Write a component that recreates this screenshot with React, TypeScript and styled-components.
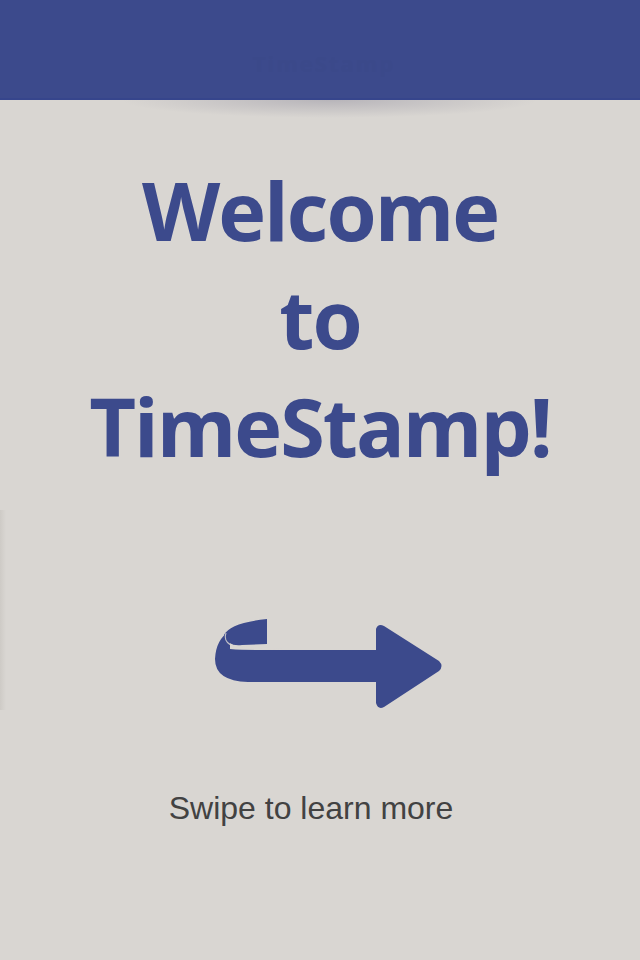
import React from "react";
import styled, { createGlobalStyle } from "styled-components";

const Global = createGlobalStyle`
  html, body { margin: 0; padding: 0; background: #d9d6d2; }
  body { width: 640px; height: 960px; overflow: hidden; }
`;

const Page = styled.div`
  width: 640px;
  height: 960px;
  background: #d9d6d2;
  display: flex;
  flex-direction: column;
  align-items: center;
  position: relative;
  overflow: hidden;
`;

const Header = styled.header`
  width: 100%;
  height: 100px;
  flex: 0 0 100px;
  background: #3c4a8c;
  position: relative;
  display: flex;
  justify-content: center;
  align-items: flex-end;
  overflow: hidden;
  &::after {
    content: "";
    position: absolute;
    left: 0;
    right: 0;
    bottom: 0;
    height: 2px;
    background: #36458c;
  }
`;

const HeaderGhost = styled.span`
  font-family: "Open Sans", "Liberation Sans", sans-serif;
  font-weight: 700;
  font-size: 22px;
  color: #3b498a;
  margin-bottom: 22px;
  letter-spacing: 2px;
  transform: translateX(4px);
`;

const Shadow = styled.div`
  position: absolute;
  top: 100px;
  left: 120px;
  width: 420px;
  height: 18px;
  background: radial-gradient(ellipse at 50% 0%, rgba(120, 118, 140, 0.35) 0%, rgba(120, 118, 140, 0) 70%);
  pointer-events: none;
`;

const Title = styled.h1`
  margin: 56px 0 0 0;
  font-family: "Open Sans", "Liberation Sans", sans-serif;
  font-weight: 700;
  font-size: 81px;
  line-height: 108px;
  letter-spacing: -2px;
  color: #3c4a8c;
  text-align: center;
`;

const ArrowWrap = styled.div`
  margin-top: 134px;
  width: 240px;
  height: 100px;
  display: flex;
  transform: translateX(12px);
`;

const Caption = styled.p`
  margin: 76px 0 0 0;
  font-family: "Liberation Sans", Arial, sans-serif;
  font-size: 32px;
  color: #424242;
  transform: translateX(-9px);
`;

const EdgeShade = styled.div`
  position: absolute;
  left: 0;
  top: 510px;
  width: 6px;
  height: 200px;
  background: linear-gradient(90deg, rgba(180, 176, 170, 0.3), rgba(180, 176, 170, 0));
`;

const Arrow = () => (
  <svg width="240" height="100" viewBox="210 615 240 100">
    <path
      d="M374 651 L374 630 Q376 624 382 627 L437 662 Q442 667 437 672 L382 708 Q376 711 374 704 L374 683 L246 683 Q213 682 213 660 Q214 640 228 632 L228 650 Q240 651 260 651 Z"
      fill="#3c4a8c"
    />
    <path
      d="M222 636 Q228 624 265 620 L265 645 L240 646 Q226 648 222 636 Z"
      fill="#3c4a8c"
    />
    <path
      d="M224 634 Q220 646 238 648 Q258 649 280 650.5"
      fill="none"
      stroke="#d9d6d2"
      strokeWidth="1.1"
      opacity="0.85"
    />
  </svg>
);

export default function App() {
  return (
    <Page>
      <Global />
      <Header>
        <HeaderGhost>TimeStamp</HeaderGhost>
      </Header>
      <Shadow />
      <EdgeShade />
      <Title>
        Welcome
        <br />
        to
        <br />
        TimeStamp!
      </Title>
      <ArrowWrap>
        <Arrow />
      </ArrowWrap>
      <Caption>Swipe to learn more</Caption>
    </Page>
  );
}
